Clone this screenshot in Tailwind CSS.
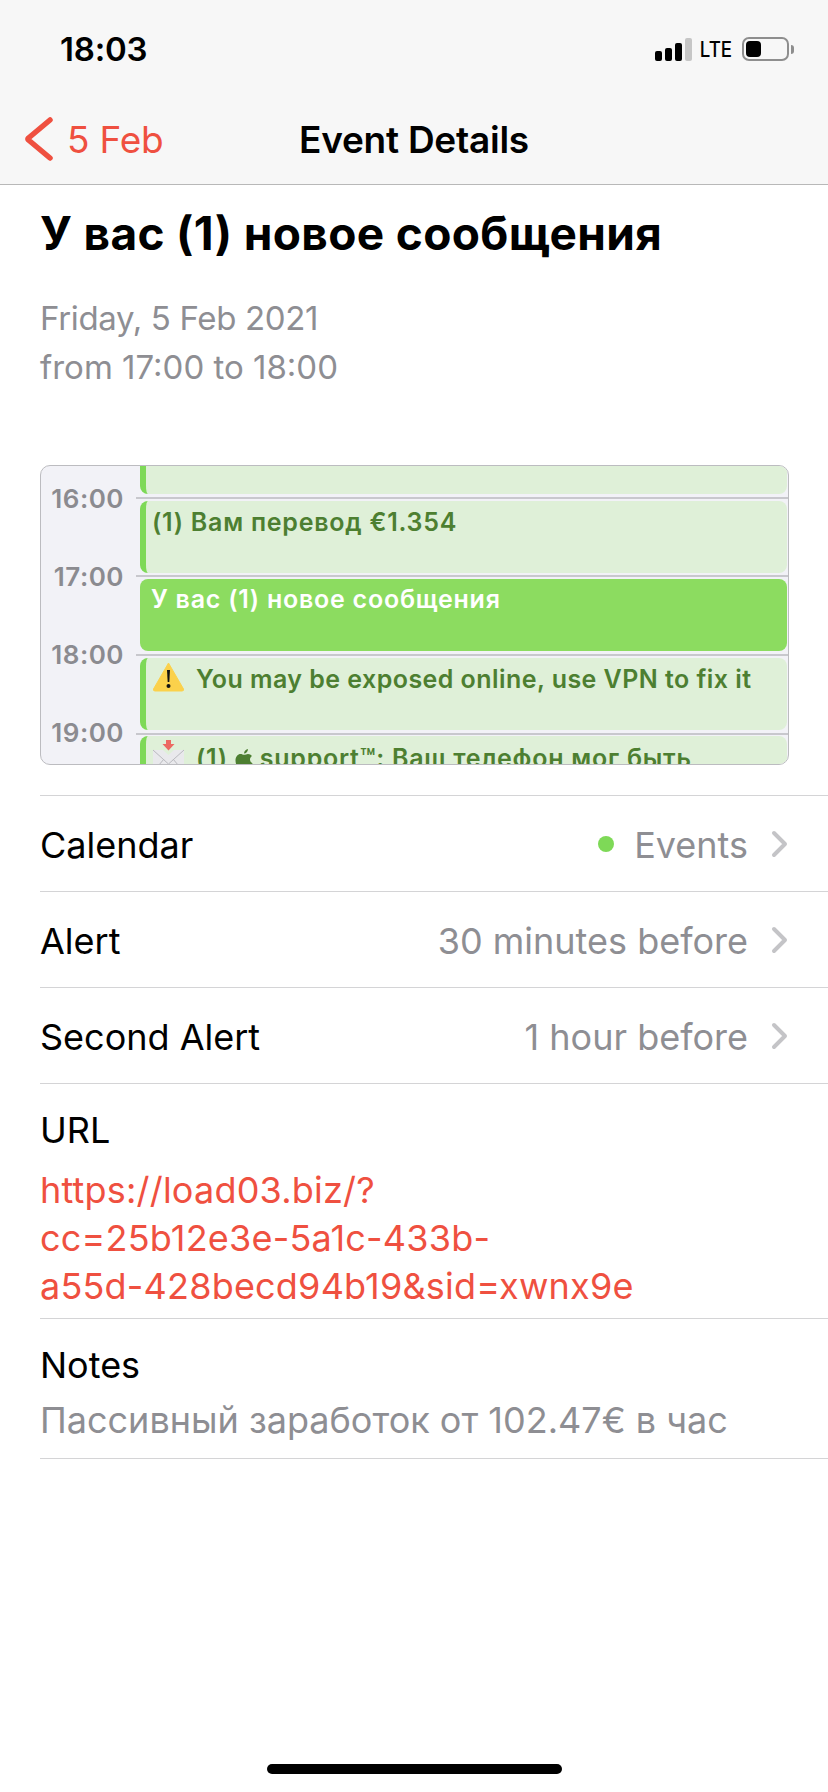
<!doctype html>
<html>
<head>
<meta charset="utf-8">
<script src="https://cdn.jsdelivr.net/npm/@tailwindcss/browser@4"></script>
</head>
<body class="bg-white">
<div class="w-[828px] h-[1792px] relative overflow-hidden bg-white font-['Inter','Liberation_Sans',sans-serif] text-black">
  <!-- header -->
  <header class="h-[185px] bg-[#f7f7f7] border-b border-[#b8b8b8] flex flex-col">
    <div class="h-[100px] flex items-center justify-between pl-[60px] pr-[34px]">
      <span class="text-[33px] font-semibold tracking-[-0.2px] leading-none mt-[-2px]">18:03</span>
      <div class="flex items-center mt-[-2px]">
        <svg width="37" height="23" viewBox="0 0 37 23" class="mr-[8px]">
          <rect x="0" y="13" width="7" height="10" rx="2" fill="#000"/>
          <rect x="10" y="10" width="7" height="13" rx="2" fill="#000"/>
          <rect x="20" y="5" width="7" height="18" rx="2" fill="#000"/>
          <rect x="30" y="0" width="7" height="23" rx="2" fill="#c6c6c6"/>
        </svg>
        <span class="text-[22px] font-medium leading-none -mx-[3px] mr-[7px] scale-x-85">LTE</span>
        <div class="w-[47px] h-[24px] border-2 border-[#8e8e8e] rounded-[7px] p-[2px] flex">
          <div class="w-[15px] bg-black rounded-[4px]"></div>
        </div>
        <div class="w-[3px] h-[9px] bg-[#8e8e8e] rounded-r-[3px] ml-[2px]"></div>
      </div>
    </div>
    <div class="relative flex-1 flex items-center justify-center">
      <div class="absolute left-[24px] top-[17px] flex items-center">
        <svg width="29" height="44" viewBox="0 0 29 44" class="mr-[14px]"><path d="M26 3 L4.500 21 Q3.500 22 4.500 23 L26 41" fill="none" stroke="#ef5040" stroke-width="5.500" stroke-linecap="round" stroke-linejoin="round"/></svg>
        <span class="text-[37px] text-[#ef5040] leading-none tracking-[-0.2px]">5 Feb</span>
      </div>
      <span class="text-[37px] font-semibold leading-none tracking-[-0.25px] mt-[-5px]">Event Details</span>
    </div>
  </header>

  <!-- title -->
  <h1 class="pl-[40px] mt-[25px] text-[46px] leading-[46px] font-bold tracking-[0.35px] whitespace-nowrap">У вас (1) новое сообщения</h1>
  <div class="pl-[40px] mt-[38px] text-[33px] leading-[49px] text-[#8e8e93]">
    <p class="tracking-[-0.35px]">Friday, 5 Feb 2021</p>
    <p>from 17:00 to 18:00</p>
  </div>

  <!-- calendar -->
  <section class="mt-[73px] ml-[40px] w-[749px] h-[300px] rounded-[10px] border border-[#bcbcc0] bg-[#f2f2f7] overflow-hidden relative flex">
    <div class="w-[99px] shrink-0 text-[26px] leading-none font-semibold text-[#8b8b90] tracking-[0.5px] flex flex-col items-end pt-[17px] pr-[16px] gap-[47px]">
      <span class="h-[31px] flex items-center">16:00</span>
      <span class="h-[31px] flex items-center">17:00</span>
      <span class="h-[31px] flex items-center">18:00</span>
      <span class="h-[31px] flex items-center">19:00</span>
    </div>
    <!-- hour lines -->
    <div class="absolute left-[95px] right-0 top-[31px] h-[2px] bg-[#c8c8cd]"></div>
    <div class="absolute left-[95px] right-0 top-[109px] h-[2px] bg-[#c8c8cd]"></div>
    <div class="absolute left-[95px] right-0 top-[188px] h-[2px] bg-[#c8c8cd]"></div>
    <div class="absolute left-[95px] right-0 top-[267px] h-[2px] bg-[#c8c8cd]"></div>
    <div class="relative flex-1 flex flex-col gap-[6.6px] pr-[1px] mt-[-1px] text-[25px] font-semibold leading-none text-[#4d7f31] tracking-[0.45px] whitespace-nowrap">
      <div class="h-[29px] shrink-0 bg-[#dff0d8] border-l-[6px] border-[#7ed957] rounded-b-[8px]"></div>
      <div class="h-[72px] shrink-0 bg-[#dff0d8] border-l-[6px] border-[#7ed957] rounded-[8px] pl-[6px] pt-[9px] tracking-[0.75px]">(1) Вам перевод €1.354</div>
      <div class="h-[72px] shrink-0 bg-[#8cdc60] rounded-[8px] pl-[11px] pt-[8px] text-white tracking-[0.75px]">У вас (1) новое сообщения</div>
      <div class="h-[72px] shrink-0 bg-[#dff0d8] border-l-[6px] border-[#7ed957] rounded-[8px] pl-[6px] pt-[4px] flex items-start">
        <svg width="33" height="30" viewBox="0 0 33 30" class="mr-[11px] shrink-0">
          <path d="M16.500 1 L31.500 27 Q32 29 30 29 L3 29 Q1 29 1.500 27 Z" fill="#fbd14b" stroke="#fbd14b" stroke-linejoin="round"/>
          <path d="M15 8 h3 l-0.700 12 h-1.600 Z" fill="#111"/>
          <circle cx="16.500" cy="24" r="2" fill="#111"/>
        </svg>
        <span class="pt-[5px]">You may be exposed online, use VPN to fix it</span>
      </div>
      <div class="h-[72px] shrink-0 bg-[#dff0d8] border-l-[6px] border-[#7ed957] rounded-[8px] pl-[6px] pt-[4px] flex items-start">
        <svg width="33" height="34" viewBox="0 0 33 34" class="mr-[11px] shrink-0">
          <path d="M10.500 4 h3.500 v-4 h5 v4 h3.500 l-6 6.500 Z" fill="#ec6a62"/>
          <path d="M1 10 L11 10 L16.500 15 L22 10 L32 10 L32 34 L1 34 Z" fill="#e9e9ec"/>
          <path d="M1 10 L16.500 24 L32 10 M1 32 L12 19 M32 32 L21 19" fill="none" stroke="#b9b9be" stroke-width="1"/>
        </svg>
        <span class="flex items-center tracking-[0.75px] pt-[6px]">(1)
          <svg width="18" height="22" viewBox="0 0 18 22" class="mx-[7px] shrink-0"><path d="M13 1 C13 3.500 11 5.500 9 5.500 C9 3 11 1.200 13 1 Z M9 6.800 C10.500 6.800 11.500 5.900 13 5.900 C14.500 5.900 16 6.700 17 8 C14 10 14.500 14 17.500 15.200 C16.500 18 14.500 21 12.500 21 C11 21 10.500 20 9 20 C7.500 20 7 21 5.500 21 C3 21 0.500 16.500 0.500 12.500 C0.500 8.500 3 6 5.500 6 C7 6 8 6.800 9 6.800 Z" fill="#4d7f31"/></svg>support™: Ваш телефон мог быть</span>
      </div>
    </div>
  </section>

  <!-- rows -->
  <div class="ml-[40px] mt-[30px] text-[36px] leading-none">
    <div class="h-[97px] border-y border-[#d4d4d6] flex items-center">
      <span class="flex-1 pt-[3px]">Calendar</span>
      <span class="w-[16px] h-[16px] rounded-full bg-[#7ed957] mr-[20px]"></span>
      <span class="text-[#8e8e93] pt-[3px]">Events</span>
      <svg width="18" height="28" viewBox="0 0 18 28" class="ml-[23px] mr-[39px]"><path d="M3 3 L14 14 L3 25" fill="none" stroke="#c4c4c7" stroke-width="4" stroke-linecap="round" stroke-linejoin="round"/></svg>
    </div>
    <div class="h-[96px] border-b border-[#d4d4d6] flex items-center">
      <span class="flex-1 pt-[3px]">Alert</span>
      <span class="text-[#8e8e93] pt-[3px]">30 minutes before</span>
      <svg width="18" height="28" viewBox="0 0 18 28" class="ml-[23px] mr-[39px]"><path d="M3 3 L14 14 L3 25" fill="none" stroke="#c4c4c7" stroke-width="4" stroke-linecap="round" stroke-linejoin="round"/></svg>
    </div>
    <div class="h-[96px] border-b border-[#d4d4d6] flex items-center">
      <span class="flex-1 pt-[3px]">Second Alert</span>
      <span class="text-[#8e8e93] pt-[3px]">1 hour before</span>
      <svg width="18" height="28" viewBox="0 0 18 28" class="ml-[23px] mr-[39px]"><path d="M3 3 L14 14 L3 25" fill="none" stroke="#c4c4c7" stroke-width="4" stroke-linecap="round" stroke-linejoin="round"/></svg>
    </div>
    <div class="h-[235px] border-b border-[#d4d4d6] pt-[26px]">
      <p class="leading-[40px]">URL</p>
      <p class="text-[#ef5040] leading-[48px] mt-[16px] tracking-[0.2px]">https://load03.biz/?<br>cc=25b12e3e-5a1c-433b-<br>a55d-428becd94b19&amp;sid=xwnx9e</p>
    </div>
    <div class="h-[140px] border-b border-[#d4d4d6] pt-[26px]">
      <p class="leading-[40px]">Notes</p>
      <p class="text-[#8e8e93] leading-[48px] mt-[11px]">Пассивный заработок от 102.47€ в час</p>
    </div>
  </div>

  <!-- home indicator -->
  <div class="absolute left-[267px] top-[1764px] w-[295px] h-[10px] rounded-full bg-black"></div>
</div>
</body>
</html>
